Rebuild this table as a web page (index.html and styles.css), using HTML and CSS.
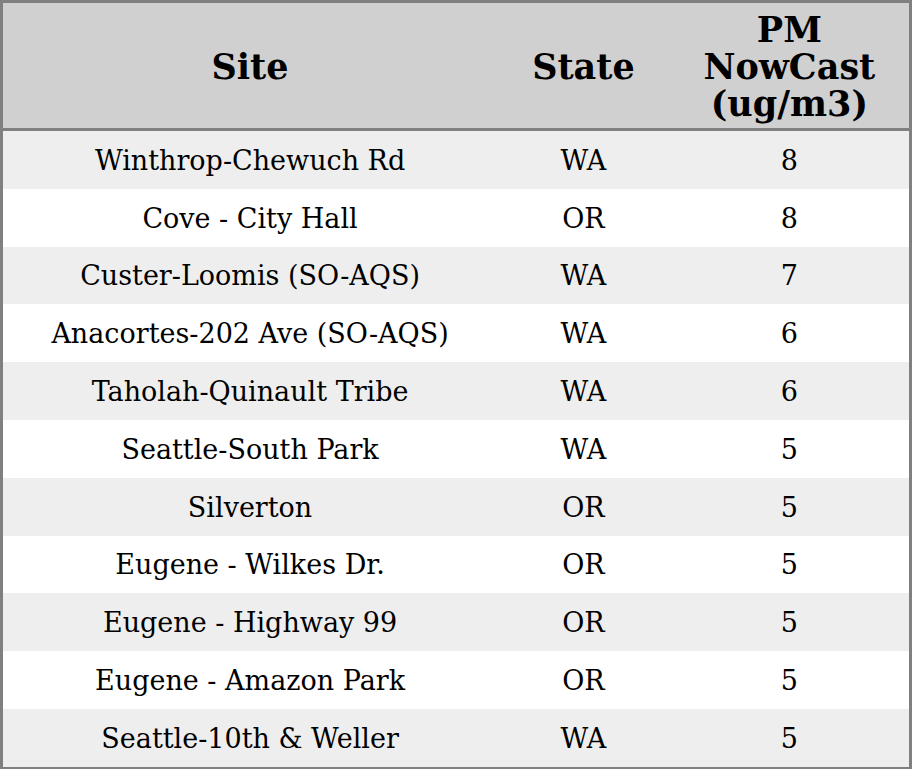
FILE: index.html
```html
<!DOCTYPE html>
<html>
<head>
<meta charset="utf-8">
<link rel="stylesheet" href="styles.css">
</head>
<body>
<table class="aq">
  <colgroup><col class="c1"><col class="c2"><col class="c3"></colgroup>
  <thead>
    <tr><th>Site</th><th>State</th><th>PM<br>NowCast<br>(ug/m3)</th></tr>
  </thead>
  <tbody>
    <tr><td>Winthrop-Chewuch Rd</td><td>WA</td><td>8</td></tr>
    <tr><td>Cove - City Hall</td><td>OR</td><td>8</td></tr>
    <tr><td>Custer-Loomis (SO-AQS)</td><td>WA</td><td>7</td></tr>
    <tr><td>Anacortes-202 Ave (SO-AQS)</td><td>WA</td><td>6</td></tr>
    <tr><td>Taholah-Quinault Tribe</td><td>WA</td><td>6</td></tr>
    <tr><td>Seattle-South Park</td><td>WA</td><td>5</td></tr>
    <tr><td>Silverton</td><td>OR</td><td>5</td></tr>
    <tr><td>Eugene - Wilkes Dr.</td><td>OR</td><td>5</td></tr>
    <tr><td>Eugene - Highway 99</td><td>OR</td><td>5</td></tr>
    <tr><td>Eugene - Amazon Park</td><td>OR</td><td>5</td></tr>
    <tr><td>Seattle-10th &amp; Weller</td><td>WA</td><td>5</td></tr>
  </tbody>
</table>
</body>
</html>
```
FILE: styles.css
```css
html, body { margin: 0; padding: 0; background: #fff; }
.aq {
  width: 912px;
  border-collapse: collapse;
  border: 3px solid #808080;
  font-family: "DejaVu Serif", serif;
  color: #000;
}
.c1 { width: 494px; }
.c2 { width: 172px; }
.c3 { width: 240px; }
.aq th {
  background: #d0d0d0;
  font-size: 35px;
  font-weight: bold;
  line-height: 37px;
  height: 123px;
  padding: 2px 0 0;
  border-bottom: 3px solid #808080;
  text-align: center;
}
.aq td {
  font-size: 27px;
  text-align: center;
  height: 56.8px;
  padding: 1px 0 0;
}
.aq tbody tr:nth-child(odd) td { background: #eeeeee; }
```
